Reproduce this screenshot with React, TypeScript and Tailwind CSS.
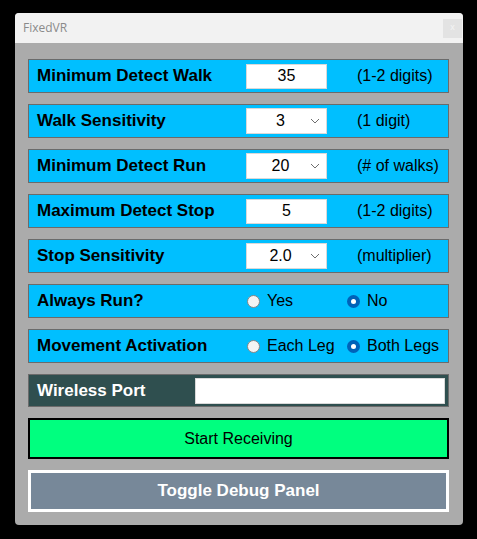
import React from 'react';

const font = { fontFamily: '"Liberation Sans", Arial, sans-serif' };

function Row({ children, dark }: { children: React.ReactNode; dark?: boolean }) {
  return (
    <div
      className={`flex h-[34px] items-center border border-[#6b6b6b] pl-2 ${
        dark ? 'bg-[#2f4f4f] text-white' : 'bg-[#00bfff] text-black'
      }`}
    >
      {children}
    </div>
  );
}

function Label({ text }: { text: string }) {
  return <div className="w-[209px] shrink-0 text-[17px] font-bold">{text}</div>;
}

function TextBox({ value }: { value: string }) {
  return (
    <div className="flex h-[25px] w-[81px] shrink-0 items-center justify-center border border-[#d9d9d9] bg-white text-[16px]">
      {value}
    </div>
  );
}

function Dropdown({ value }: { value: string }) {
  return (
    <div className="flex h-[26px] w-[81px] shrink-0 items-center border border-[#d9d9d9] bg-white text-[16px]">
      <span className="flex-1 pl-1 text-center">{value}</span>
      <svg width="10" height="6" viewBox="0 0 10 6" className="mr-[6px]">
        <path d="M1 1 L5 5 L9 1" fill="none" stroke="#6e6e6e" strokeWidth="1" />
      </svg>
    </div>
  );
}

function Hint({ text }: { text: string }) {
  return <div className="ml-[30px] text-[16px]">{text}</div>;
}

function Radio({ checked, label, width }: { checked?: boolean; label: string; width?: string }) {
  return (
    <div className={`flex items-center ${width ?? ''}`}>
      {checked ? (
        <span className="flex h-[13px] w-[13px] items-center justify-center rounded-full bg-[#0062b8]">
          <span className="h-[5px] w-[5px] rounded-full bg-white" />
        </span>
      ) : (
        <span className="h-[13px] w-[13px] rounded-full border border-[#858585] bg-[#f4f4f4]" />
      )}
      <span className="ml-[7px] text-[16px]">{label}</span>
    </div>
  );
}

export default function App() {
  return (
    <div className="h-[539px] w-[477px] bg-black pl-[15px] pt-[13px]" style={font}>
      <div className="flex h-[512px] w-[448px] flex-col overflow-hidden rounded-[4px] bg-[#ababab]">
        <div className="flex h-[30px] shrink-0 items-center justify-between bg-[#f2f2f2] pl-2">
          <span className="text-[12px] text-[#8a8a8a]" style={{ fontFamily: '"Open Sans", "Noto Sans", sans-serif' }}>
            FixedVR
          </span>
          <div className="mr-[1px] flex h-[19px] w-[19px] items-center justify-center bg-[#e3e3e3] text-[9px] text-[#f4f4f4]">
            x
          </div>
        </div>
        <div className="flex flex-1 flex-col gap-[11px] pl-[13px] pr-[14px] pt-4">
          <Row>
            <Label text="Minimum Detect Walk" />
            <TextBox value="35" />
            <Hint text="(1-2 digits)" />
          </Row>
          <Row>
            <Label text="Walk Sensitivity" />
            <Dropdown value="3" />
            <Hint text="(1 digit)" />
          </Row>
          <Row>
            <Label text="Minimum Detect Run" />
            <Dropdown value="20" />
            <Hint text="(# of walks)" />
          </Row>
          <Row>
            <Label text="Maximum Detect Stop" />
            <TextBox value="5" />
            <Hint text="(1-2 digits)" />
          </Row>
          <Row>
            <Label text="Stop Sensitivity" />
            <Dropdown value="2.0" />
            <Hint text="(multiplier)" />
          </Row>
          <Row>
            <Label text="Always Run?" />
            <div className="w-[1px]" />
            <Radio label="Yes" width="w-[100px]" />
            <Radio label="No" checked />
          </Row>
          <Row>
            <Label text="Movement Activation" />
            <div className="w-[1px]" />
            <Radio label="Each Leg" width="w-[100px]" />
            <Radio label="Both Legs" checked />
          </Row>
          <div className="flex h-[33px] items-center border border-[#6b6b6b] bg-[#2f4f4f] pl-2 pr-[3px] text-white">
            <div className="w-[158px] shrink-0 text-[17px] font-bold">Wireless Port</div>
            <div className="h-[26px] flex-1 border border-[#d9d9d9] bg-white" />
          </div>
          <div className="flex h-[41px] items-center justify-center border-2 border-black bg-[#00ff7f] text-[16px] text-black">
            Start Receiving
          </div>
          <div className="flex h-[42px] items-center justify-center border-[3px] border-white bg-[#778899] text-[17px] font-bold text-white">
            Toggle Debug Panel
          </div>
        </div>
      </div>
    </div>
  );
}
